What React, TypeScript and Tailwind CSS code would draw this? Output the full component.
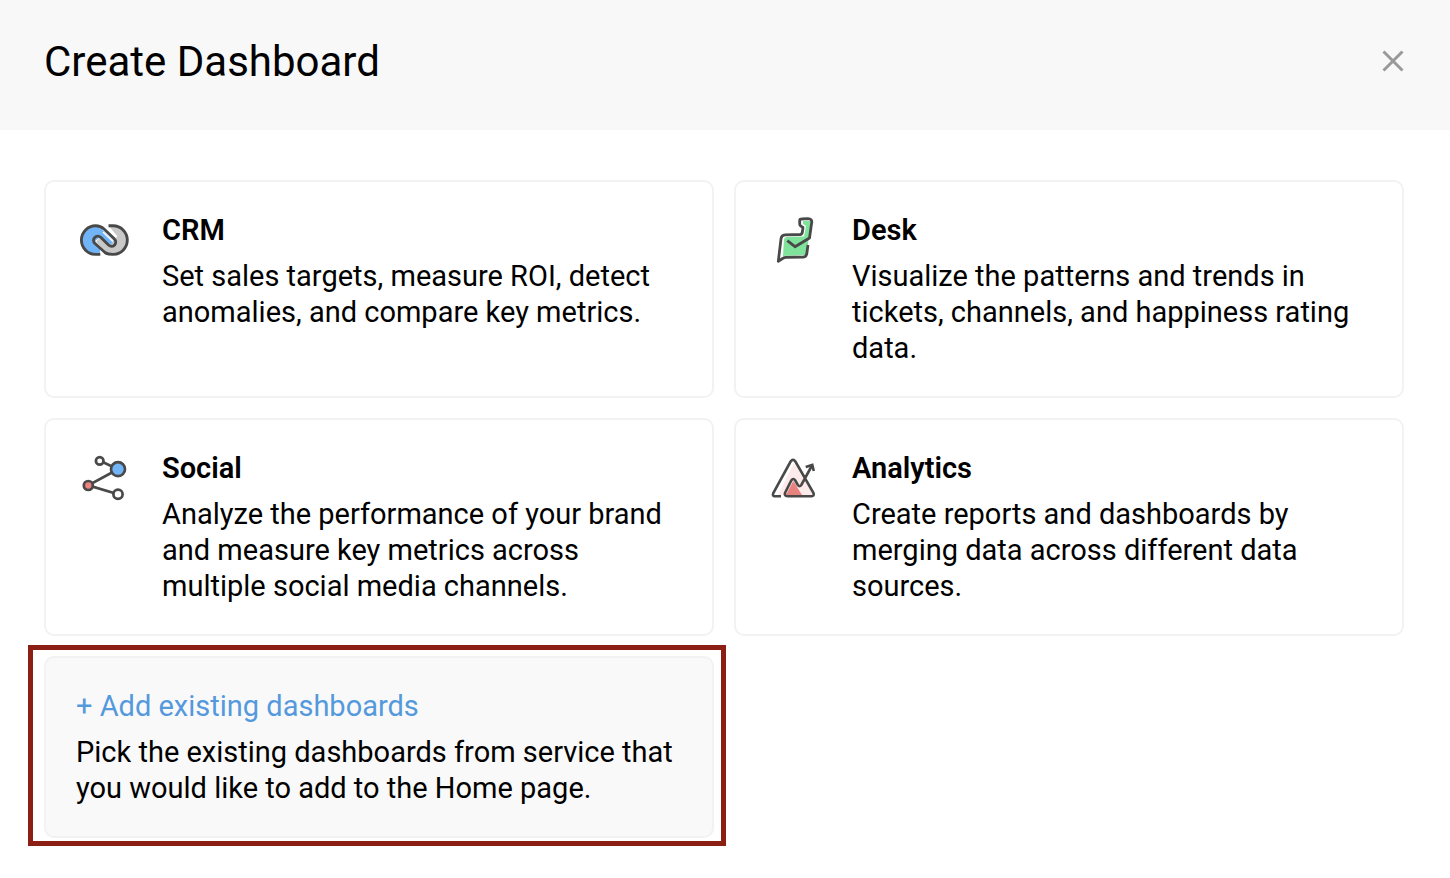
import React from 'react';

interface Service {
  name: string;
  description: string;
  icon: React.ReactNode;
}

const CrmIcon = () => (
  <svg viewBox="0 0 56 56" className="w-14 h-14" fill="none" aria-hidden="true">
    <path d="M24 42 H19 A13.5 13.5 0 0 1 19 15 C22 15 24 15.500 26 17.500 L38 29 L37 33 L33 34 L24 25 L18 30 L24 36 Z" fill="#72b4f8" />
    <path d="M33 14 H38 A14 14 0 0 1 38 42 C34 42 31 41 29 39 L20 30 L24 25 L33 34 L38 29 L41 24 Z" fill="#c9c9c9" />
    <path d="M29 14.500 L40.500 25" stroke="#fff" strokeWidth="2" />
    <path d="M27 20 L37 29.500" stroke="#fff" strokeWidth="1.500" />
    <path
      d="M24.300 42.400 H19.700 A14.300 14.300 0 0 1 19.700 13.800 C23 13.800 25.800 15 28 17 L38 26.500 C42.500 31 37 37 32.500 33 L25 25.500 C20.500 21.500 14.800 27.500 19 31.500 L29 40.500 C31.500 42.400 34 42.400 37 42.400 A14.300 14.300 0 0 0 37 13.800 H32.500"
      stroke="#494949"
      strokeWidth="2.900"
    />
  </svg>
);

const DeskIcon = () => (
  <svg viewBox="0 0 56 56" className="w-14 h-14" fill="none" aria-hidden="true">
    <path d="M18 27 L20 25 L38 24.500 L40 14 L37 12 V9 H45 L42.500 28 L40.500 43 L17 44 Z" fill="#80e39c" />
    <path
      d="M42 33 L40.800 41.500 Q40.300 44.800 37.500 45 L20 45.400 Q18 45.500 17 46.300 L12.300 49.300 L15 26.800 Q15.400 23.200 19 22.900 L34 22.500 Q36 22.400 36.300 20.500 L37 15.500 L35 14.200 Q33.700 13.500 33.700 12 V8.500 Q33.700 7 35.500 7 L42 6.700 Q46.300 6.800 45.700 10.500 L43.500 26 L29 34.700 L21.300 28.700"
      stroke="#494949"
      strokeWidth="2.800"
      strokeLinejoin="round"
    />
  </svg>
);

const SocialIcon = () => (
  <svg viewBox="0 0 56 56" className="w-14 h-14" aria-hidden="true">
    <g stroke="#494949" strokeWidth="2.700">
      <path d="M24 10.700 L42 19.300 L12.300 35.300 L42 44.300" fill="none" />
      <circle cx="23.700" cy="10.900" r="3.800" fill="#fff" />
      <circle cx="42" cy="19.200" r="7" fill="#72b4f8" />
      <circle cx="12.300" cy="35.500" r="4.500" fill="#ee8380" />
      <circle cx="42" cy="44.300" r="4.600" fill="#fff" />
    </g>
  </svg>
);

const AnalyticsIcon = () => (
  <svg viewBox="0 0 56 56" className="w-14 h-14" fill="none" aria-hidden="true">
    <path d="M12 45 L28 13 L47 45 Z" fill="#fdeaea" />
    <path d="M20 45 L27.300 31 L36 45 Z" fill="#e8827f" />
    <path
      d="M15 46.300 H9 Q6 46 7.300 43 L24.600 11.500 Q27 8.300 29.400 11.500 L47.500 43 Q48.500 46 45.500 46.300 H21.500 Q18 46 19 43 L25.300 30.500 Q27.300 27.500 29.300 30.500 L31.800 35 Q33.500 37.300 35.300 35 L46 15.500"
      stroke="#494949"
      strokeWidth="2.600"
    />
    <path d="M39.700 17 L46.300 15 L47.800 21" stroke="#494949" strokeWidth="2.600" />
  </svg>
);

const services: Service[] = [
  {
    name: 'CRM',
    description: 'Set sales targets, measure ROI, detect anomalies, and compare key metrics.',
    icon: <CrmIcon />,
  },
  {
    name: 'Desk',
    description: 'Visualize the patterns and trends in tickets, channels, and happiness rating data.',
    icon: <DeskIcon />,
  },
  {
    name: 'Social',
    description: 'Analyze the performance of your brand and measure key metrics across multiple social media channels.',
    icon: <SocialIcon />,
  },
  {
    name: 'Analytics',
    description: 'Create reports and dashboards by merging data across different data sources.',
    icon: <AnalyticsIcon />,
  },
];

const ServiceCard = ({ service }: { service: Service }) => (
  <button
    type="button"
    className="flex items-start gap-[30px] rounded-[10px] border-2 border-[#f2f2f2] bg-white p-[30px] text-left cursor-pointer"
  >
    <span className="shrink-0">{service.icon}</span>
    <span className="flex flex-col gap-[10px]">
      <span className="font-semibold">{service.name}</span>
      <span>{service.description}</span>
    </span>
  </button>
);

const CreateDashboard: React.FC = () => {
  return (
    <section className="min-h-screen bg-white font-['Roboto',sans-serif] text-black">
      {/* Header */}
      <header className="flex items-start justify-between bg-[#f8f8f8] pt-[38px] pb-11 pl-11 pr-[46px]">
        <h1 className="text-[42px] leading-[48px]">Create Dashboard</h1>
        <button type="button" aria-label="Close" className="mt-3 cursor-pointer">
          <svg viewBox="0 0 22 22" className="w-[22px] h-[22px]" aria-hidden="true">
            <path d="M1.500 1.500 L20.500 20.500 M20.500 1.500 L1.500 20.500" stroke="#999" strokeWidth="3" />
          </svg>
        </button>
      </header>

      {/* Services */}
      <main className="grid grid-cols-2 gap-5 pt-[50px] pb-10 pl-11 pr-[46px] text-[29px] leading-9">
        {services.map((service) => (
          <ServiceCard key={service.name} service={service} />
        ))}

        <div className="relative">
          <button
            type="button"
            className="flex w-full flex-col gap-[10px] rounded-[10px] border-2 border-[#f2f2f2] bg-[#f9f9f9] p-[30px] text-left cursor-pointer"
          >
            <span className="text-[#5599dd]">+ Add existing dashboards</span>
            <span>Pick the existing dashboards from service that you would like to add to the Home page.</span>
          </button>
          <div className="pointer-events-none absolute -top-[11px] -right-3 -bottom-2 -left-4 border-[5px] border-[#8c1f14]" />
        </div>
      </main>
    </section>
  );
};

export default function App() {
  return <CreateDashboard />;
}
